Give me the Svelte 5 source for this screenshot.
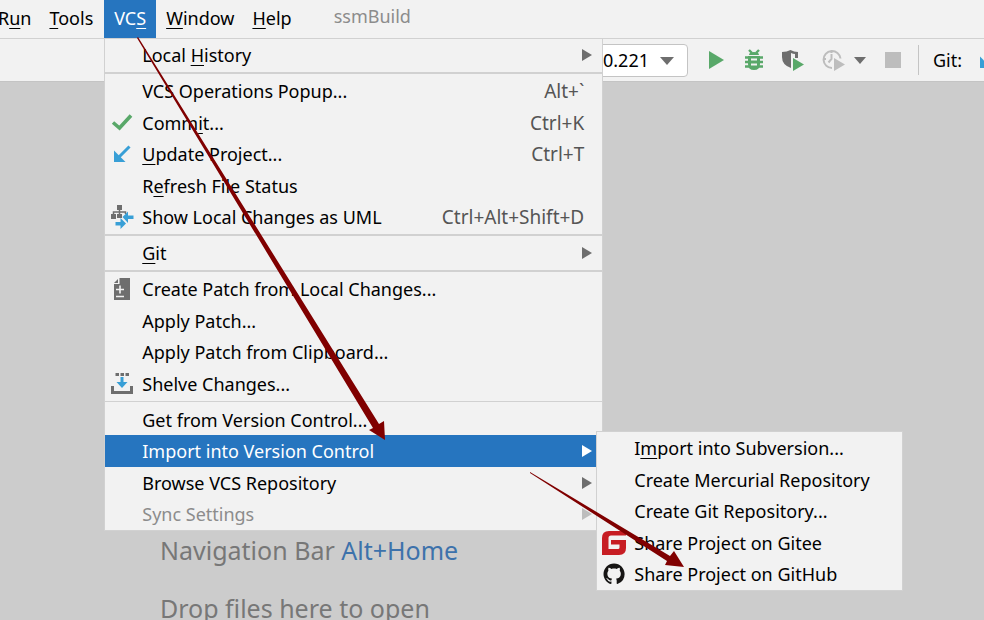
<script>
  const separator = { type: 'separator' };
  const vcsMenu = [
    { before: 'Local ', key: 'H', after: 'istory', submenu: true },
    separator,
    { before: 'VCS Operations Popup...', shortcut: 'Alt+`' },
    { before: 'Comm', key: 'i', after: 't...', shortcut: 'Ctrl+K', icon: 'check' },
    { key: 'U', after: 'pdate Project...', shortcut: 'Ctrl+T', icon: 'update' },
    { before: 'R', key: 'e', after: 'fresh File Status' },
    { before: 'Show Local Changes as UML', shortcut: 'Ctrl+Alt+Shift+D', icon: 'uml' },
    separator,
    { key: 'G', after: 'it', submenu: true },
    separator,
    { before: 'Create Patch from Local Changes...', icon: 'patch' },
    { before: 'Apply Patch...' },
    { before: 'Apply Patch from Clipboard...' },
    { before: 'Shelve Changes...', icon: 'shelve' },
    { type: 'separator', thin: true },
    { before: 'Get from Version Control...' },
    { before: 'Import into Version Control', submenu: true, selected: true },
    { before: 'Browse VCS Repository', submenu: true },
    { before: 'Sync Settings', submenu: true, disabled: true }
  ];
  const importMenu = [
    { before: 'I', key: 'm', after: 'port into Subversion...' },
    { before: 'Create Mercurial Repository' },
    { before: 'Create Git Repository...' },
    { before: 'Share Project on Gitee', icon: 'gitee' },
    { before: 'Share Project on GitHub', icon: 'github' }
  ];
</script>

{#snippet icon(name)}
  <svg class="icon" viewBox="0 0 24 24" aria-hidden="true">
    {#if name === 'check'}
      <path d="M3 11.5 9.5 17 21 4.5" fill="none" stroke="#59a869" stroke-width="3.6" />
    {:else if name === 'update'}
      <path d="M19.500 4.500 8 16" fill="none" stroke="#389fd6" stroke-width="3" />
      <path d="M4 8.500v11.500h11.500z" fill="#389fd6" />
    {:else if name === 'uml'}
      <path d="M7 0h5v5H7zM1 9h5v5H1zM7 9h5v4H7z" fill="#6e6e6e" />
      <path d="M9.500 4v6M3.500 10V7h12v2" fill="none" stroke="#6e6e6e" stroke-width="1.500" />
      <path d="M12.500 12 18 6.500v4h5.500v3.500H18v4zM5.500 17h5v-4l5.500 5.500-5.500 5.500v-3.500h-5z" fill="#389fd6" />
    {:else if name === 'patch'}
      <path d="M9.500 1H20v22H4V7h5.500zM8 2v4H4z" fill="#6e6e6e" />
      <path d="M10 8.500v8M6 12.500h8M6 19.500h8" stroke="#f2f2f2" stroke-width="1.600" />
    {:else if name === 'shelve'}
      <path d="M5.500 1H9v3H5.500zM10.500 1H14v3h-3.500zM15.500 1H19v3h-3.500z" fill="#6e6e6e" />
      <path d="M10.500 5h3v5h4L12 16 6.500 10h4z" fill="#389fd6" />
      <path d="M2.500 14v6.500h19V14" fill="none" stroke="#6e6e6e" stroke-width="3" />
    {:else if name === 'gitee'}
      <path
        fill="#c71d23"
        d="M24 0v4.500H9Q6.500 4.500 6.500 7v11h9.500q1.500 0 1.500-1.500v-3H9V9h15v8q0 7-7 7H0V7Q0 0 7 0z"
      />
    {:else if name === 'github'}
      <path
        transform="translate(1.500 1.500) scale(1.320)"
        fill="#161514"
        d="M8 0C3.580 0 0 3.580 0 8c0 3.540 2.290 6.530 5.470 7.590.4.070.55-.17.55-.38 0-.19-.01-.82-.01-1.490-2.010.37-2.530-.49-2.690-.94-.09-.23-.48-.94-.82-1.130-.28-.15-.68-.52-.01-.53.63-.01 1.080.58 1.230.82.72 1.210 1.870.87 2.330.66.07-.52.28-.87.51-1.070-1.780-.2-3.640-.89-3.640-3.950 0-.87.31-1.590.82-2.150-.08-.2-.36-1.020.08-2.120 0 0 .67-.21 2.200.82.64-.18 1.320-.27 2-.27s1.360.09 2 .27c1.530-1.040 2.200-.82 2.200-.82.44 1.100.16 1.920.08 2.120.51.56.82 1.270.82 2.150 0 3.070-1.870 3.750-3.650 3.950.29.25.54.73.54 1.480 0 1.070-.01 1.930-.01 2.200 0 .21.15.46.55.38A8.010 8.010 0 0 0 16 8c0-4.420-3.580-8-8-8z"
      />
    {/if}
  </svg>
{/snippet}

{#snippet entry(item)}
  {#if item.type === 'separator'}
    <li class="separator" class:thin={item.thin} role="separator"></li>
  {:else}
    <li class="row" role="none">
      <button class="item" class:selected={item.selected} role="menuitem" disabled={item.disabled}>
        <span class="gutter">{#if item.icon}{@render icon(item.icon)}{/if}</span>
        <span class="label">{item.before ?? ''}{#if item.key}<u>{item.key}</u>{/if}{item.after ?? ''}</span>
        {#if item.shortcut}<span class="shortcut">{item.shortcut}</span>{/if}
        {#if item.submenu}
          <svg class="chevron" viewBox="0 0 10 12" aria-hidden="true"><path d="M0 0 10 6 0 12z" /></svg>
        {/if}
      </button>
      {#if item.selected}
        <ul class="popup sub" role="menu">
          {#each importMenu as child}{@render entry(child)}{/each}
        </ul>
      {/if}
    </li>
  {/if}
{/snippet}

<div class="ide">
  <nav class="menubar">
    <button class="top first">R<u>u</u>n</button>
    <button class="top"><u>T</u>ools</button>
    <div class="open">
      <button class="top active" aria-expanded="true">VC<u>S</u></button>
      <ul class="popup main" role="menu">
        {#each vcsMenu as item}{@render entry(item)}{/each}
      </ul>
    </div>
    <button class="top"><u>W</u>indow</button>
    <button class="top"><u>H</u>elp</button>
    <span class="project">ssmBuild</span>
  </nav>

  <div class="toolbar">
    <div class="combo">
      <select aria-label="Run configuration"><option>0.221</option></select>
      <svg viewBox="0 0 14 8" aria-hidden="true"><path d="M0 0h14L7 8z" fill="#6e6e6e" /></svg>
    </div>
    <button class="tool" aria-label="Run">
      <svg viewBox="0 0 24 24"><path d="M5 3 20 12 5 21z" fill="#59a869" /></svg>
    </button>
    <button class="tool" aria-label="Debug">
      <svg viewBox="0 0 24 24">
        <path d="M7 7q0-3 5-3t5 3zM6 8h12v8q0 6-6 6t-6-6z" fill="#59a869" />
        <path d="M7 2l3 3M17 2l-3 3M3 9.500h18M3 14h18M3 18.500h18" stroke="#59a869" stroke-width="2.400" />
        <path d="M9 11.500h6M9 16.500h6" stroke="#f2f2f2" stroke-width="2" />
      </svg>
    </button>
    <button class="tool" aria-label="Run with coverage">
      <svg viewBox="0 0 24 24">
        <path d="M2 4q5 0 8.500-2Q14 4 18 4v6h-3V6q-2 0-4-1v15Q2 17 2 9z" fill="#6e6e6e" />
        <path d="M13 10 24 16.500 13 23z" fill="#59a869" />
      </svg>
    </button>
    <button class="tool wide" aria-label="Profile">
      <svg viewBox="0 0 24 24">
        <path d="M11 20a8.500 8.500 0 1 1 8.500-9.500M10.500 6v5l-3 3.500M3 11h2M10.500 3v2" fill="none" stroke="#bdbdbd" stroke-width="2" />
        <path d="M13 10 24 16.500 13 23z" fill="#bdbdbd" />
      </svg>
      <svg class="caret" viewBox="0 0 12 7"><path d="M0 0h12L6 7z" fill="#6e6e6e" /></svg>
    </button>
    <button class="tool stop" aria-label="Stop" disabled><span></span></button>
    <span class="divider"></span>
    <span class="git">Git:</span>
    <button class="tool" aria-label="Update project">{@render icon('update')}</button>
  </div>

  <main>
    <p>Navigation Bar <kbd>Alt+Home</kbd></p>
    <p>Drop files here to open</p>
  </main>

  <svg class="pointers" width="984" height="620" viewBox="0 0 984 620" aria-hidden="true">
    <path d="M137 38 138 37 379 424 384 421 385 440 369 430 373 428z" />
    <path d="M530 473 530 472 670 556 674 551 684 567 665 565 667 561z" />
  </svg>
</div>

<style>
  :global(body) {
    margin: 0;
    background: #ccc;
  }
  .ide {
    position: relative;
    min-height: 100vh;
    overflow: hidden;
    font: 18px/24px 'Noto Sans', 'Open Sans', sans-serif;
    color: #000;
  }
  button,
  select {
    margin: 0;
    padding: 0;
    border: 0;
    background: none;
    font: inherit;
    color: inherit;
  }
  svg {
    display: block;
  }
  u {
    text-decoration-thickness: 1px;
    text-underline-offset: 3px;
  }
  .menubar {
    display: flex;
    height: 38px;
    background: #f2f2f2;
    border-bottom: 1px solid #d1d1d1;
  }
  .top {
    height: 38px;
    padding: 0 9px 2px;
  }
  .first {
    margin-left: -11px;
  }
  .open {
    position: relative;
    margin: 0 1px 0 2px;
  }
  .active {
    padding: 0 10px 2px;
    background: #2675bf;
    color: #fff;
  }
  .project {
    margin-left: 33px;
    line-height: 32px;
    color: #8c8c8c;
  }
  .popup {
    position: absolute;
    z-index: 1;
    box-sizing: border-box;
    margin: 0;
    padding: 0;
    list-style: none;
    background: #f2f2f2;
    border: 1px solid #d1d1d1;
    color: #000;
  }
  .main {
    top: 38px;
    left: 0;
    width: 499px;
  }
  .sub {
    top: -4px;
    left: 491px;
    width: 307px;
  }
  .row {
    position: relative;
    height: 32px;
  }
  .row:nth-child(even) {
    height: 31px;
  }
  .item {
    display: flex;
    align-items: center;
    width: 100%;
    height: 100%;
    padding-right: 10px;
    text-align: left;
    white-space: nowrap;
  }
  .gutter {
    width: 37px;
    padding-left: 5px;
    box-sizing: border-box;
  }
  .icon {
    width: 24px;
    height: 24px;
  }
  .label {
    flex: 1;
  }
  .shortcut {
    margin-right: 8px;
    font-size: 19px;
    color: #555;
  }
  .chevron {
    width: 10px;
    height: 12px;
    fill: #6e6e6e;
  }
  .selected {
    background: #2675bf;
    color: #fff;
  }
  .selected .chevron {
    fill: #fff;
  }
  .item:disabled {
    color: #8c8c8c;
  }
  .item:disabled .chevron {
    fill: #bdbdbd;
  }
  .separator {
    height: 2px;
    margin: 1px 0;
    background: #d1d1d1;
  }
  .thin {
    height: 1px;
    margin: 2px 0;
  }
  .toolbar {
    display: flex;
    align-items: center;
    height: 42px;
    padding-left: 590px;
    background: #f2f2f2;
    border-bottom: 1px solid #c4c4c4;
  }
  .combo {
    position: relative;
    flex: none;
    width: 98px;
    margin-right: 16px;
  }
  .combo select {
    appearance: none;
    display: block;
    width: 100%;
    height: 33px;
    padding-left: 12px;
    background: #fff;
    border: 1px solid #c4c4c4;
    border-radius: 4px;
  }
  .combo svg {
    position: absolute;
    top: 13px;
    right: 14px;
    width: 14px;
    height: 8px;
  }
  .tool {
    display: flex;
    flex: none;
    align-items: center;
    margin-right: 14px;
  }
  .wide {
    margin-left: 3px;
  }
  .tool svg {
    width: 24px;
    height: 24px;
  }
  .tool .caret {
    width: 12px;
    height: 7px;
    margin-left: 9px;
  }
  .stop {
    margin: 0 17px 0 5px;
  }
  .stop span {
    width: 16px;
    height: 16px;
    background: #bdbdbd;
  }
  .divider {
    flex: none;
    width: 1px;
    height: 30px;
    margin-right: 14px;
    background: #c4c4c4;
  }
  .git {
    margin-right: 14px;
  }
  main {
    padding: 448px 0 0 160px;
    font-size: 25px;
    line-height: 40px;
    color: #777;
  }
  p {
    margin: 0 0 18px;
  }
  kbd {
    font: inherit;
    color: #3d72ab;
  }
  .pointers {
    position: absolute;
    top: 0;
    left: 0;
    z-index: 2;
    fill: #800000;
    pointer-events: none;
  }
</style>
